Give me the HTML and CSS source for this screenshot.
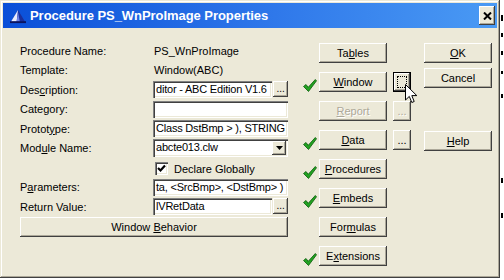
FILE: index.html
```html
<!DOCTYPE html>
<html lang="en">
<head>
    <meta charset="UTF-8">
    <title>Procedure PS_WnProImage Properties</title>
    <link rel="stylesheet" href="styles.css">
</head>
<body>
<div class="screen">
<div class="window">
    <div class="titlebar">
        <svg class="app-icon" width="16" height="15" viewBox="0 0 17 15">
            <polygon points="8.5,0.5 1,13 16,13" fill="#1b2f9c"/>
            <polygon points="8.5,0.5 1,13 7,13" fill="#e8ecff"/>
            <polygon points="8.5,3 7,13 10.5,13" fill="#6d82e6"/>
            <rect x="0" y="12.5" width="17" height="2" fill="#0a1360"/>
        </svg>
        <span class="title">Procedure PS_WnProImage Properties</span>
        <button class="close" type="button">
            <svg width="9" height="8" viewBox="0 0 9 8"><path d="M1 0.5 L8 7.5 M8 0.5 L1 7.5" stroke="#000" stroke-width="2"/></svg>
        </button>
    </div>

    <div class="client">
        <div class="fields">
            <span class="label">Procedure Name:</span>
            <span class="value">PS_WnProImage</span>

            <span class="label">Template:</span>
            <span class="value">Window(ABC)</span>

            <span class="label">Des<u>c</u>ription:</span>
            <div class="field-row">
                <div class="edit short">ditor - ABC Edition V1.6</div>
                <button class="btn dots" type="button">...</button>
            </div>

            <span class="label">Category:</span>
            <div class="edit"></div>

            <span class="label">Protot<u>y</u>pe:</span>
            <div class="edit">Class DstBmp &gt; ), STRING</div>

            <span class="label">Mod<u>u</u>le Name:</span>
            <div class="edit combo">
                <span>abcte013.clw</span>
                <span class="drop"><svg width="7" height="4" viewBox="0 0 7 4"><polygon points="0,0 7,0 3.5,4" fill="#000"/></svg></span>
            </div>

            <span></span>
            <label class="checkrow">
                <span class="checkbox"><svg width="9" height="9" viewBox="0 0 9 9"><path d="M1 4 L3.5 6.5 L8 1.5" stroke="#000" stroke-width="2.2" fill="none"/></svg></span>
                Declare Globally
            </label>

            <span class="label">P<u>a</u>rameters:</span>
            <div class="edit">ta, &lt;SrcBmp&gt;, &lt;DstBmp&gt; )</div>

            <span class="label">Return Value:</span>
            <div class="field-row">
                <div class="edit short">lVRetData</div>
                <button class="btn dots" type="button">...</button>
            </div>

            <button class="btn wide" type="button">Window <u>B</u>ehavior</button>
        </div>

        <div class="actions">
            <div class="tools">
                <div class="tool-row">
                    <span class="tick"></span>
                    <button class="btn tool" type="button">Ta<u>b</u>les</button>
                </div>
                <div class="tool-row">
                    <span class="tick"><svg width="14" height="13" viewBox="0 0 14 13"><path d="M0.5 7.5 L3 5.5 L5.2 8.3 L12.3 0.5 L13.5 1.8 L5.5 12.5 Z" fill="#22a322" stroke="#0a5a0a" stroke-width="0.8"/></svg></span>
                    <button class="btn tool" type="button"><u>W</u>indow</button>
                    <button class="btn small focused" type="button"><span class="focus-rect"></span></button>
                </div>
                <div class="tool-row">
                    <span class="tick"></span>
                    <button class="btn tool disabled" type="button"><u>R</u>eport</button>
                    <button class="btn small disabled" type="button">...</button>
                </div>
                <div class="tool-row">
                    <span class="tick"><svg width="14" height="13" viewBox="0 0 14 13"><path d="M0.5 7.5 L3 5.5 L5.2 8.3 L12.3 0.5 L13.5 1.8 L5.5 12.5 Z" fill="#22a322" stroke="#0a5a0a" stroke-width="0.8"/></svg></span>
                    <button class="btn tool" type="button"><u>D</u>ata</button>
                    <button class="btn small" type="button">...</button>
                </div>
                <div class="tool-row">
                    <span class="tick"><svg width="14" height="13" viewBox="0 0 14 13"><path d="M0.5 7.5 L3 5.5 L5.2 8.3 L12.3 0.5 L13.5 1.8 L5.5 12.5 Z" fill="#22a322" stroke="#0a5a0a" stroke-width="0.8"/></svg></span>
                    <button class="btn tool" type="button"><u>P</u>rocedures</button>
                </div>
                <div class="tool-row">
                    <span class="tick"><svg width="14" height="13" viewBox="0 0 14 13"><path d="M0.5 7.5 L3 5.5 L5.2 8.3 L12.3 0.5 L13.5 1.8 L5.5 12.5 Z" fill="#22a322" stroke="#0a5a0a" stroke-width="0.8"/></svg></span>
                    <button class="btn tool" type="button"><u>E</u>mbeds</button>
                </div>
                <div class="tool-row">
                    <span class="tick"></span>
                    <button class="btn tool" type="button">For<u>m</u>ulas</button>
                </div>
                <div class="tool-row">
                    <span class="tick"><svg width="14" height="13" viewBox="0 0 14 13"><path d="M0.5 7.5 L3 5.5 L5.2 8.3 L12.3 0.5 L13.5 1.8 L5.5 12.5 Z" fill="#22a322" stroke="#0a5a0a" stroke-width="0.8"/></svg></span>
                    <button class="btn tool" type="button">E<u>x</u>tensions</button>
                </div>
            </div>

            <div class="dialog-buttons">
                <button class="btn tool" type="button"><u>O</u>K</button>
                <button class="btn tool" type="button">Cancel</button>
                <button class="btn tool help" type="button"><u>H</u>elp</button>
            </div>
        </div>
    </div>

    <svg class="cursor" width="13" height="20" viewBox="0 0 13 20">
        <path d="M0.5 0.5 L0.5 16 L4.3 12.4 L6.8 18.5 L9.2 17.5 L6.8 11.6 L11.8 11.6 Z" fill="#fff" stroke="#000" stroke-width="1"/>
    </svg>
</div>

<div class="behind">
    <span class="mark m1"></span>
    <span class="mark m2"></span>
    <span class="mark m3"></span>
    <span class="mark m4"></span>
    <span class="mark m5"></span>
    <span class="mark m6"></span>
    <span class="mark m7"></span>
</div>
</div>
</body>
</html>
```

FILE: styles.css
```css
body {
    margin: 0;
    background: #fff;
    font-family: "Liberation Sans", Arial, sans-serif;
    font-size: 11px;
    color: #000;
}
.screen {
    display: flex;
    width: 504px;
    height: 280px;
    overflow: hidden;
}
.window {
    position: relative;
    box-sizing: border-box;
    width: 500px;
    height: 278px;
    padding: 3px;
    background: #ECE9D8;
    box-shadow: inset -1px -1px #404040, inset 1px 1px #ECE9D8,
                inset -2px -2px #ACA899, inset 2px 2px #fff;
}
.titlebar {
    display: flex;
    align-items: center;
    height: 25px;
    padding-left: 7px;
    background: linear-gradient(to right, #0a4fd8, #2f78ea 55%, #4a9af4);
}
.app-icon {
    margin-right: 4px;
    margin-top: 1px;
}
.title {
    flex: 1;
    color: #fff;
    font-weight: bold;
    font-size: 13px;
    letter-spacing: -0.05px;
}
.close {
    display: flex;
    align-items: center;
    justify-content: center;
    width: 16px;
    height: 19px;
    margin-right: 2px;
    padding: 0;
    border: none;
    background: #ECE9D8;
    box-shadow: inset -1px -1px #404040, inset 1px 1px #fff, inset -2px -2px #ACA899;
}

.client {
    display: flex;
    padding: 13px 0 0 17px;
}
.fields {
    display: grid;
    grid-template-columns: 133px 135px;
    grid-template-rows: 19px 20px 19px 20px 19px 20px 19px 20px 19px 21px;
    align-items: center;
    width: 268px;
}
.label, .value {
    white-space: nowrap;
}
.value {
    padding-left: 1px;
}
.field-row {
    display: flex;
    gap: 1px;
}
.edit {
    box-sizing: border-box;
    height: 17px;
    padding: 2px 0 0 3px;
    background: #fff;
    white-space: nowrap;
    letter-spacing: -0.2px;
    overflow: hidden;
    box-shadow: inset 1px 1px #808080, inset 2px 2px #404040,
                inset -1px -1px #fff, inset -2px -2px #ECE9D8;
}
.edit.short {
    width: 120px;
}
.combo {
    display: flex;
    justify-content: space-between;
    height: 18px;
    padding-right: 2px;
}
.drop {
    display: flex;
    align-items: center;
    justify-content: center;
    width: 14px;
    height: 14px;
    background: #ECE9D8;
    box-shadow: inset -1px -1px #404040, inset 1px 1px #fff, inset -2px -2px #ACA899;
}
.checkrow {
    display: flex;
    align-items: center;
    gap: 6px;
    padding: 2px 0 0 2px;
}
.checkbox {
    display: flex;
    align-items: center;
    justify-content: center;
    width: 13px;
    height: 13px;
    background: #fff;
    box-shadow: inset 1px 1px #808080, inset 2px 2px #404040,
                inset -1px -1px #fff, inset -2px -2px #ECE9D8;
}

.btn {
    padding: 0;
    border: none;
    background: #ECE9D8;
    font-family: "Liberation Sans", Arial, sans-serif;
    font-size: 11px;
    color: #000;
    box-shadow: inset -1px -1px #404040, inset 1px 1px #fff, inset -2px -2px #ACA899;
}
.btn.dots {
    width: 15px;
    height: 16px;
    line-height: 12px;
    font-size: 10px;
}
.btn.wide {
    grid-column: 1 / 3;
    align-self: end;
    height: 20px;
}
.btn.disabled {
    color: #ACA899;
    text-shadow: 1px 1px #fff;
}

.actions {
    display: flex;
    margin-top: 2px;
}
.tools {
    display: flex;
    flex-direction: column;
    gap: 9px;
}
.tool-row {
    display: flex;
    align-items: center;
    height: 20px;
}
.tick {
    display: flex;
    width: 31px;
    padding: 6px 0 0 15px;
    box-sizing: border-box;
}
.btn.tool {
    width: 68px;
    height: 20px;
}
.btn.small {
    width: 18px;
    height: 20px;
    margin-left: 6px;
    line-height: 14px;
}
.btn.focused {
    position: relative;
    box-shadow: inset 0 0 0 1px #000, inset -2px -2px #404040, inset 2px 2px #fff, inset -3px -3px #ACA899;
}
.focus-rect {
    position: absolute;
    left: 4px;
    top: 4px;
    right: 4px;
    bottom: 4px;
    border: 1px dotted #000;
}
.dialog-buttons {
    display: flex;
    flex-direction: column;
    gap: 5px;
    margin-left: 13px;
}
.btn.help {
    margin-top: 38px;
}
.cursor {
    position: absolute;
    left: 405px;
    top: 84px;
}

.behind {
    display: flex;
    flex-direction: column;
    width: 4px;
}
.mark {
    display: block;
    width: 2px;
    margin-left: 1px;
    background: #000;
}
.m1 { height: 6px; margin-top: 15px; }
.m2 { height: 4px; margin-top: 12px; }
.m3 { height: 4px; margin-top: 14px; }
.m4 { height: 3px; margin-top: 16px; }
.m5 { height: 4px; margin-top: 20px; }
.m6 { height: 5px; margin-top: 80px; }
.m7 { height: 5px; margin-top: 30px; }
```
